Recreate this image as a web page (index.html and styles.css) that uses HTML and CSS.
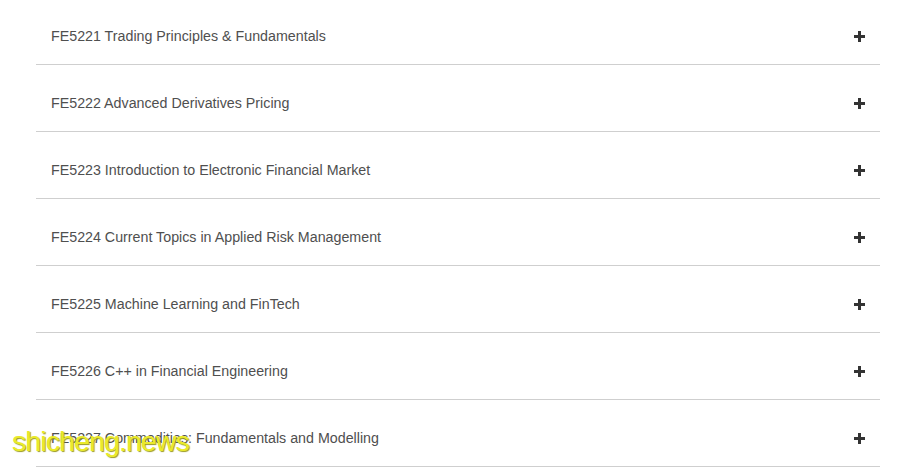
FILE: index.html
```html
<!DOCTYPE html>
<html>
<head>
<meta charset="utf-8">
<link rel="stylesheet" href="styles.css">
</head>
<body>
<div class="accordion">
  <div class="item"><span class="title">FE5221 Trading Principles &amp; Fundamentals</span><span class="plus"></span></div>
  <div class="item"><span class="title">FE5222 Advanced Derivatives Pricing</span><span class="plus"></span></div>
  <div class="item"><span class="title">FE5223 Introduction to Electronic Financial Market</span><span class="plus"></span></div>
  <div class="item"><span class="title">FE5224 Current Topics in Applied Risk Management</span><span class="plus"></span></div>
  <div class="item"><span class="title">FE5225 Machine Learning and FinTech</span><span class="plus"></span></div>
  <div class="item"><span class="title">FE5226 C++ in Financial Engineering</span><span class="plus"></span></div>
  <div class="item"><span class="title">FE5227 Commodities: Fundamentals and Modelling</span><span class="plus"></span></div>
</div>
<div class="watermark">shicheng.news</div>
</body>
</html>
```
FILE: styles.css
```css
html, body {
  margin: 0;
  padding: 0;
  background: #fff;
}
body {
  font-family: "Liberation Sans", Arial, sans-serif;
  overflow: hidden;
}
.accordion {
  margin: -2px 30px 0 36px;
  width: 844px;
}
.item {
  height: 66px;
  border-bottom: 1px solid #cfcfcf;
  display: flex;
  align-items: center;
  justify-content: space-between;
  padding: 0 15px;
  box-sizing: border-box;
  height: 67px;
}
.title {
  font-size: 14.25px;
  color: #4f4f4f;
  margin-top: 10px;
}
.plus {
  position: relative;
  width: 11px;
  height: 11px;
  margin-top: 10px;
}
.plus::before, .plus::after {
  content: "";
  position: absolute;
  background: #333;
}
.plus::before {
  left: 0; right: 0; top: 4px; height: 3px;
}
.plus::after {
  top: 0; bottom: 0; left: 4px; width: 3px;
}
.watermark {
  position: absolute;
  left: 12px;
  top: 425px;
  font-size: 28.5px;
  letter-spacing: -0.9px;
  color: #eaea2a;
  text-shadow: 1px 1px 1px #9a9a20;
  font-family: "Liberation Sans", Arial, sans-serif;
}
```
